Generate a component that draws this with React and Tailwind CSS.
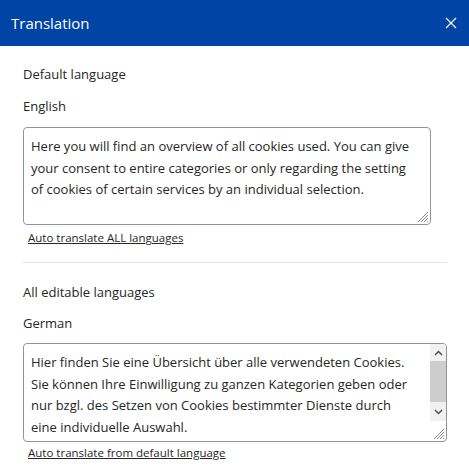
function Grip() {
  return (
    <svg width="13" height="13" viewBox="0 0 13 13" className="absolute right-[1px] bottom-[1px]">
      <path d="M12 2 L2 12 M12 5 L5 12 M12 8 L8 12 M12 11 L11 12" stroke="#8a8a8a" strokeWidth="1" />
    </svg>
  );
}

function Box({ lines, size, scroll }) {
  return (
    <div className={`relative flex border border-[#8f959e] rounded-[4px] overflow-hidden bg-white ${size}`}>
      <div className="flex-1 pl-[7px] pt-[8px] text-[13px] leading-[21.7px] text-[#262626]">
        {lines.map((l, i) => (
          <div key={i} className="whitespace-nowrap">
            {l}
          </div>
        ))}
      </div>
      {scroll && (
        <div className="w-[16px] h-[77px] flex flex-col bg-[#f1f1f1]">
          <div className="h-[17px] flex items-center justify-center">
            <svg width="9" height="6" viewBox="0 0 9 6">
              <path d="M1 5 L4.5 1.5 L8 5" stroke="#505050" strokeWidth="1.5" fill="none" />
            </svg>
          </div>
          <div className="h-[41px] bg-[#cdcdcd]" />
          <div className="flex-1 flex items-center justify-center">
            <svg width="9" height="6" viewBox="0 0 9 6">
              <path d="M1 1 L4.5 4.5 L8 1" stroke="#505050" strokeWidth="1.5" fill="none" />
            </svg>
          </div>
        </div>
      )}
      <Grip />
    </div>
  );
}

export default function App() {
  const en = [
    "Here you will find an overview of all cookies used. You can give",
    "your consent to entire categories or only regarding the setting",
    "of cookies of certain services by an individual selection.",
  ];
  const de = [
    "Hier finden Sie eine Übersicht über alle verwendeten Cookies.",
    "Sie können Ihre Einwilligung zu ganzen Kategorien geben oder",
    "nur bzgl. des Setzen von Cookies bestimmter Dienste durch",
    "eine individuelle Auswahl.",
  ];

  return (
    <div
      className="w-[469px] h-[471px] bg-white text-[#262626] overflow-hidden"
      style={{ fontFamily: '"Open Sans", "Noto Sans", sans-serif' }}
    >
      {/* header */}
      <div className="h-[46px] bg-[#0045a6] flex items-center justify-between pl-[11px] pr-[12px]">
        <span className="text-white text-[15px]">Translation</span>
        <svg width="12" height="12" viewBox="0 0 12 12" className="text-white">
          <path d="M1 1 L11 11 M11 1 L1 11" stroke="currentColor" strokeWidth="1.2" />
        </svg>
      </div>

      <div className="px-[23px] pt-[18px]">
        <div className="text-[13px] leading-[20px]">Default language</div>
        <div className="text-[13px] leading-[20px] mt-[12px]">English</div>
        <div className="mt-[11px]">
          <Box lines={en} size="w-[408px] h-[98px]" />
        </div>
        <a href="#" className="block w-fit ml-[5px] mt-[6px] text-[11.5px] leading-[14px] underline text-[#262626]">
          Auto translate ALL languages
        </a>

        <div className="border-t border-[#e5e5e5] mt-[17px] w-[424px]" />

        <div className="text-[13px] leading-[20px] mt-[19px]">All editable languages</div>
        <div className="text-[13px] leading-[20px] mt-[11px]">German</div>
        <div className="mt-[10px]">
          <Box lines={de} size="w-[424px] h-[99px]" scroll />
        </div>
        <a href="#" className="block w-fit ml-[5px] mt-[4px] text-[11.5px] leading-[14px] underline text-[#262626]">
          Auto translate from default language
        </a>
      </div>
    </div>
  );
}
